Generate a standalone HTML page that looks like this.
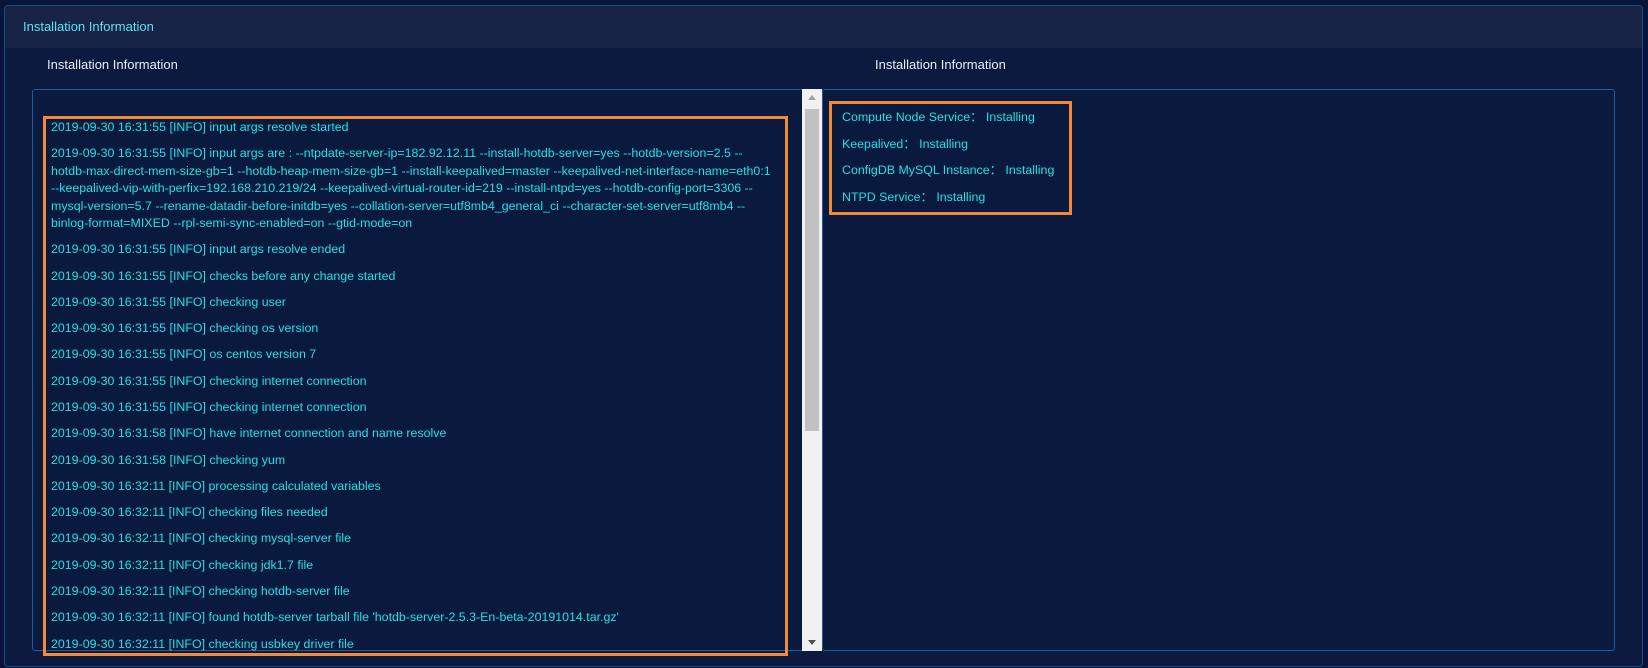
<!DOCTYPE html>
<html><head><meta charset="utf-8"><style>
*{margin:0;padding:0;box-sizing:border-box}
body{width:1648px;height:668px;overflow:hidden;background:#08143a;font-family:"Liberation Sans",sans-serif;position:relative}
.panel{position:absolute;left:4px;top:5px;width:1639px;height:662px;border:1px solid #1d4a86;border-radius:4px;background:#0b1a3e;overflow:hidden}
.hdr{position:absolute;left:0;top:0;right:0;height:42px;background:#172347;color:#5ee0f0;font-size:13px;line-height:42px;padding-left:18px}
.lbl{position:absolute;color:#e8eef8;font-size:13px}
.box{position:absolute;border:1px solid #1d5aa0;border-radius:3px;background:#0a1a3e}
.orange{position:absolute;border:3px solid #f38a3a}
.log{position:absolute;left:51px;top:119px;width:740px;color:#22e0e6;font-size:12.4px;line-height:17.4px;white-space:nowrap}
.log p{margin-bottom:8.9px}
.st{position:absolute;left:842px;top:104px;color:#22e0e6;font-size:12.4px;line-height:26.5px}
.sb{position:absolute;left:802px;top:89px;width:20px;height:562px;background:#f1f1f1}
.thumb{position:absolute;left:3px;top:20px;width:14px;height:322px;background:#c1c1c1}
</style></head><body>
<div class="panel"><div class="hdr">Installation Information</div></div>
<div class="lbl" style="left:47px;top:57px">Installation Information</div>
<div class="lbl" style="left:875px;top:57px">Installation Information</div>
<div class="box" style="left:32px;top:89px;width:772px;height:562px"></div>
<div class="box" style="left:822px;top:89px;width:793px;height:562px"></div>
<div class="sb"><div class="thumb"></div>
<div style="position:absolute;left:6px;top:6px;border-left:4px solid transparent;border-right:4px solid transparent;border-bottom:5px solid #a0a0a0"></div>
<div style="position:absolute;left:6px;bottom:6px;border-left:4px solid transparent;border-right:4px solid transparent;border-top:5px solid #505050"></div></div>
<div class="orange" style="left:43px;top:116px;width:745px;height:540px"></div>
<div class="orange" style="left:829px;top:101px;width:243px;height:114px"></div>
<div class="log">
<p>2019-09-30 16:31:55 [INFO] input args resolve started</p>
<p>2019-09-30 16:31:55 [INFO] input args are : --ntpdate-server-ip=182.92.12.11 --install-hotdb-server=yes --hotdb-version=2.5 --<br>hotdb-max-direct-mem-size-gb=1 --hotdb-heap-mem-size-gb=1 --install-keepalived=master --keepalived-net-interface-name=eth0:1<br>--keepalived-vip-with-perfix=192.168.210.219/24 --keepalived-virtual-router-id=219 --install-ntpd=yes --hotdb-config-port=3306 --<br>mysql-version=5.7 --rename-datadir-before-initdb=yes --collation-server=utf8mb4_general_ci --character-set-server=utf8mb4 --<br>binlog-format=MIXED --rpl-semi-sync-enabled=on --gtid-mode=on</p>
<p>2019-09-30 16:31:55 [INFO] input args resolve ended</p>
<p>2019-09-30 16:31:55 [INFO] checks before any change started</p>
<p>2019-09-30 16:31:55 [INFO] checking user</p>
<p>2019-09-30 16:31:55 [INFO] checking os version</p>
<p>2019-09-30 16:31:55 [INFO] os centos version 7</p>
<p>2019-09-30 16:31:55 [INFO] checking internet connection</p>
<p>2019-09-30 16:31:55 [INFO] checking internet connection</p>
<p>2019-09-30 16:31:58 [INFO] have internet connection and name resolve</p>
<p>2019-09-30 16:31:58 [INFO] checking yum</p>
<p>2019-09-30 16:32:11 [INFO] processing calculated variables</p>
<p>2019-09-30 16:32:11 [INFO] checking files needed</p>
<p>2019-09-30 16:32:11 [INFO] checking mysql-server file</p>
<p>2019-09-30 16:32:11 [INFO] checking jdk1.7 file</p>
<p>2019-09-30 16:32:11 [INFO] checking hotdb-server file</p>
<p>2019-09-30 16:32:11 [INFO] found hotdb-server tarball file 'hotdb-server-2.5.3-En-beta-20191014.tar.gz'</p>
<p>2019-09-30 16:32:11 [INFO] checking usbkey driver file</p>
</div>
<div class="st">Compute Node Service： Installing<br>Keepalived： Installing<br>ConfigDB MySQL Instance： Installing<br>NTPD Service： Installing</div>
</body></html>
